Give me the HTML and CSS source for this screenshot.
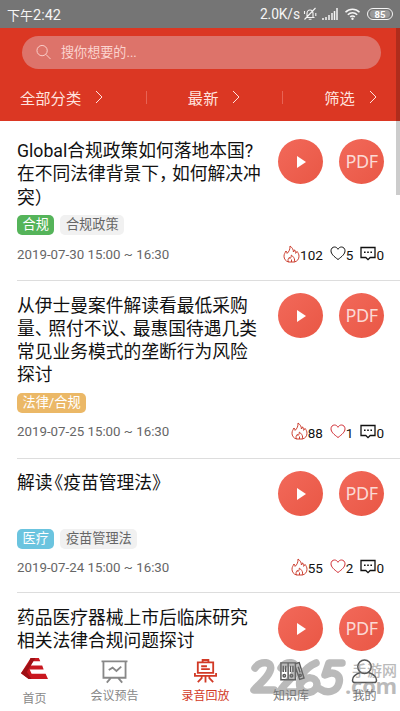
FILE: index.html
```html
<!DOCTYPE html>
<html lang="zh-CN">
<head>
<meta charset="utf-8">
<title>录音回放</title>
<link rel="stylesheet" href="styles.css">
</head>
<body>
<svg class="defs" aria-hidden="true">
  <symbol id="fire" viewBox="0 0 17 18"><path d="M5.500 17C2.500 16.200 1 13.800 1 11.200c0-2.200 1.200-3.400 1.900-5.200.8.600 1.200 1.400 1.200 2.400C6 6.700 7.300 4 7 1c2.300 1.600 3.500 3.700 3.400 6 .6-.5 1-1.200 1.100-2.200 1 1.200 1.200 2.300 1.100 3.500.7-.4 1.200-1 1.400-1.900 1.200 1.500 2 3 2 4.800 0 2.900-1.700 5-4.500 5.800zM5.500 17c-1-2-.3-3.500.9-4.700.3.400.5.800.5 1.300 1-.9 1.500-2 1.400-3.500 2 1.400 3.300 3.100 3.300 5 0 .8-.1 1.400-.4 1.900M8.500 17v-2.500"/></symbol>
  <symbol id="heart" viewBox="0 0 16 15"><path d="M8 13.500C4 10.500 1 8 1 4.800 1 2.600 2.600 1 4.500 1 6 1 7.300 1.900 8 3.300 8.700 1.900 10 1 11.500 1 13.400 1 15 2.600 15 4.800 15 8 12 10.500 8 13.500z"/></symbol>
  <symbol id="chat" viewBox="0 0 16 15"><path d="M1 1.500h14v10H10.200L8 13.700l-2.200-2.200H1z"/><path class="dots" d="M4 5.500h1.600v1.600H4zM7.200 5.500h1.600v1.600H7.200zM10.400 5.500H12v1.600h-1.600z"/></symbol>
  <symbol id="chev" viewBox="0 0 8 14"><path d="M1 1l6 6-6 6"/></symbol>
</svg>
<div class="screen">
  <div class="status">
    <span class="clock">下午<b>2:42</b></span>
    <span class="speed">2.0K/s</span>
    <svg class="bell" viewBox="0 0 14 14"><path d="M3 10.500h8.500M4 10V6.500c0-2 1.200-3.500 3-3.500s3 1.500 3 3.500V10M5.700 12.200h2.800M1.500 12.500L12.500 1M1.500 4v3M12.800 6v3"/></svg>
    <svg class="signal" viewBox="0 0 16 12"><path d="M1 12v-2M4 12V9M7 12V7M10 12V5M12.500 12V3M15 12V0"/></svg>
    <svg class="wifi" viewBox="0 0 16 12"><path d="M1 4.300c4-4 10-4 14 0M3.300 6.800c2.700-2.700 6.700-2.700 9.400 0M5.700 9c1.300-1.300 3.300-1.300 4.600 0"/><circle cx="8" cy="10.700" r="1.200"/></svg>
    <span class="battery"><b>85</b></span>
  </div>
  <header class="header">
    <div class="search">
      <svg viewBox="0 0 16 16"><circle cx="6.500" cy="6.500" r="5.500"/><path d="M10.500 10.500l5 5"/></svg>
      <span>搜你想要的...</span>
    </div>
    <nav class="filters">
      <div class="filter">全部分类<svg><use href="#chev"/></svg></div>
      <i></i>
      <div class="filter mid">最新<svg><use href="#chev"/></svg></div>
      <i></i>
      <div class="filter last">筛选<svg><use href="#chev"/></svg></div>
    </nav>
  </header>
  <main class="list">
    <article class="item first">
      <div class="top"><h2><span class="latin">Global</span>合规政策如何落地本国?<br>在不同法律背景下<span class="comma">，</span>如何解决冲<br>突）</h2><span class="btn play"></span><span class="btn">PDF</span></div>
      <div class="tags"><span class="tag green">合规</span><span class="tag">合规政策</span></div>
      <div class="meta"><time>2019-07-30 15:00 ~ 16:30</time><span class="stat hot"><svg><use href="#fire"/></svg>102</span><span class="stat like none"><svg><use href="#heart"/></svg>5</span><span class="stat chat"><svg><use href="#chat"/></svg>0</span></div>
    </article>
    <article class="item second">
      <div class="top"><h2>从伊士曼案件解读看最低采购<br>量<span class="pause">、</span>照付不议<span class="pause">、</span>最惠国待遇几类<br>常见业务模式的垄断行为风险<br>探讨</h2><span class="btn play"></span><span class="btn">PDF</span></div>
      <div class="tags"><span class="tag orange">法律/合规</span></div>
      <div class="meta"><time>2019-07-25 15:00 ~ 16:30</time><span class="stat hot"><svg><use href="#fire"/></svg>88</span><span class="stat like"><svg><use href="#heart"/></svg>1</span><span class="stat chat"><svg><use href="#chat"/></svg>0</span></div>
    </article>
    <article class="item third">
      <div class="top"><h2>解读<span class="open">《</span>疫苗管理法》</h2><span class="btn play"></span><span class="btn">PDF</span></div>
      <div class="tags"><span class="tag blue">医疗</span><span class="tag">疫苗管理法</span></div>
      <div class="meta"><time>2019-07-24 15:00 ~ 16:30</time><span class="stat hot"><svg><use href="#fire"/></svg>55</span><span class="stat like"><svg><use href="#heart"/></svg>2</span><span class="stat chat"><svg><use href="#chat"/></svg>0</span></div>
    </article>
    <article class="item fourth">
      <div class="top"><h2>药品医疗器械上市后临床研究<br>相关法律合规问题探讨</h2><span class="btn play"></span><span class="btn">PDF</span></div>
    </article>
  </main>
  <nav class="tabs">
    <div class="tab home"><svg viewBox="0 0 28 24"><path class="r1" d="M10 1h8.500l1.500 3.500h-7.500L10 9h12l1.500 4H9l2 4.500h14.500L28 23H8L0 17z"/><path class="r2" d="M0 17l8-11 2-5h5L6 15.500 11 23H8z"/></svg><span>首页</span></div>
    <div class="tab meet"><svg viewBox="0 0 28 26"><path d="M.5 2.500h27M2.500 2.500v17h23v-17M8 11.500l4-2.500 4 3.500L21 8M10 20l-4 4.500M18 20l4 4.500"/></svg><span>会议预告</span></div>
    <div class="tab active"><svg viewBox="0 0 28 26"><path d="M6 3.500h16v11H6zM11 3V1h6v2M9.500 7.500h6M9.500 10.500h9M3 14.500v3h22v-3M14 17.500v7M10 17.500v2.500l-4 4M18 17.500v2.500l4 4"/></svg><span>录音回放</span></div>
    <div class="tab lib"><svg viewBox="0 0 28 26"><path d="M3 4h7.500v17.500H3zM10.500 4H18v17.500h-7.500zM18 5l4-1.200 5 16-4.500 1.400L18 8M5.500 7v6.500M8 7v6.500M13 7v6.500M15.500 7v6.500M21 8l2 6"/><circle cx="6.500" cy="17.500" r="1.300"/><circle cx="14" cy="17.500" r="1.300"/><circle cx="23" cy="17" r="1.200"/></svg><span>知识库</span></div>
    <div class="tab me"><svg viewBox="0 0 28 26"><circle cx="14" cy="8" r="7"/><path d="M10 14c-5 1.500-8.500 4.500-8.500 8 0 1.500 1 2.500 2.500 2.500h20c1.500 0 2.500-1 2.500-2.500 0-3.500-3.500-6.500-8.500-8"/></svg><span>我的</span></div>
  </nav>
  <div class="watermark">
    <svg viewBox="0 0 100 40"><path d="M6 10C11 2 25 3 21 13 18 21 9 27 5 32h20M32 10C37 2 49 3 47 13 44 21 33 27 31 34h16M67 5C55 10 49 21 51 29 54 38 68 35 68 26 67 18 57 18 52 25M93 5H80L76 17C85 12 92 17 90 25 88 34 78 36 71 31"/></svg>
    <span>手游网</span><em>.com</em>
  </div>
  <div class="scroll"></div>
</div>
</body>
</html>
```
FILE: styles.css
```css
* { box-sizing: border-box; }
body { margin: 0; font-family: Roboto, "Noto Sans CJK SC", sans-serif; }
svg { fill: none; stroke: currentColor; flex: none; }
.defs { position: absolute; width: 0; height: 0; }
.screen { position: relative; width: 400px; height: 711px; overflow: hidden; background: #fff; display: flex; flex-direction: column; }
.status { height: 28px; flex: none; background: #757575; color: #f5f5f5; display: flex; align-items: center; padding: 0 7px; font-size: 14px; }
.clock { flex: 1; font-size: 13px; }
.clock b { font-weight: 400; font-size: 14.500px; }
.speed { font-size: 13.800px; letter-spacing: -.1px; }
.bell { width: 14px; height: 14px; margin-left: 3px; stroke-width: 1.100; }
.signal { width: 16px; height: 12px; margin-left: 5px; stroke-width: 1.500; }
.wifi { width: 17px; height: 12px; margin-left: 6px; stroke-width: 1.600; }
.wifi circle { fill: currentColor; stroke: none; }
.battery { width: 26px; height: 12px; margin-left: 6px; border: 1px solid #f5f5f5; border-radius: 6px; padding: 1px 2px; display: flex; }
.battery b { flex: 1; background: #999; border-radius: 4px; font-size: 9.500px; line-height: 9px; text-align: center; color: #fff; }
.header { height: 93px; flex: none; background: #db3723; padding: 7.500px 19px 0 22px; color: #ffe3df; }
.search { height: 33.500px; border-radius: 17px; background: #dd736a; display: flex; align-items: center; padding-left: 14px; font-size: 13.100px; color: #fbd3cf; }
.search svg { width: 15px; height: 16px; margin-right: 10px; }
.search span { position: relative; top: -1px; }
.filters { display: flex; align-items: center; height: 24px; margin: 16px 0 0 -2px; font-size: 15.300px; }
.filter { display: flex; align-items: center; width: 126.500px; }
.filter svg { width: 8px; height: 14px; margin-left: 14px; }
.filters i { width: 1px; height: 13px; background: #e86355; }
.mid { padding-left: 41px; width: 136px; }
.last { padding-left: 41px; width: 98px; white-space: nowrap; }
.list { flex: 1; overflow: hidden; min-height: 0; }
.item { margin-left: 17px; padding-right: 16px; border-bottom: 1px solid #ddd; }
.first { height: 160px; padding-top: 18px; }
.second { height: 178px; padding-top: 12px; }
.third { height: 134px; padding-top: 12px; }
.fourth { padding-top: 13px; border: 0; }
.top { display: flex; align-items: flex-start; }
h2 { flex: 1; margin: 0; padding-top: 1.500px; font-size: 17.750px; font-weight: 400; line-height: 23.300px; color: #111; white-space: nowrap; }
.first h2 { padding-top: .5px; line-height: 23.500px; }
.fourth h2 { padding-top: .5px; }
.latin { font-size: 17.700px; }
.third h2 { min-height: 56px; padding-top: .5px; }
.comma { display: inline-block; width: 13px; }
.pause { display: inline-block; width: 13.500px; }
.open { margin-left: -7px; }
.btn { width: 45px; height: 45px; border-radius: 50%; background: linear-gradient(135deg, #f2695a, #e95745); color: #fbd9d4; font: 18px/45px "Noto Sans", sans-serif; letter-spacing: -.4px; text-align: center; flex: none; }
.btn + .btn { margin-left: 16px; }
.btn.play { display: flex; align-items: center; padding-left: 19px; }
.play::before { content: ""; border-left: 9px solid #fff; border-top: 6px solid transparent; border-bottom: 6px solid transparent; }
.tags { display: flex; gap: 6px; margin-top: 5px; height: 20px; }
.third .tags { margin-top: 2px; }
.tag { height: 20px; border-radius: 5px; background: #f1f1f1; color: #666; font-size: 13.200px; line-height: 19px; padding: 0 5.500px; white-space: nowrap; }
.green { background: #55b45a; color: #fff; }
.orange { background: #ebb867; color: #fff; }
.blue { background: #6bc4df; color: #fff; }
.meta { display: flex; align-items: center; height: 20px; margin-top: 9px; color: #111; font-size: 13.500px; }
.third .meta { margin-top: 8px; }
time { flex: 1; color: #666; font-size: 13.300px; }
.stat { display: flex; align-items: center; height: 18px; margin-left: 7px; line-height: 22px; padding-top: 2px; }
.stat svg { width: 16px; height: 15px; margin: -3px 0 0; }
.stat.hot svg { width: 17px; height: 18px; color: #cc3f30; }
.like svg { color: #d22d35; }
.none svg { color: #111; }
.chat svg { stroke-width: 1.300; }
.dots { fill: currentColor; stroke: none; }
.tabs { height: 57px; flex: none; background: #fff; display: flex; color: #888; }
.tab { width: 91px; display: flex; flex-direction: column; align-items: center; font-size: 12px; line-height: 16px; padding-top: 5px; }
.tab svg { width: 27px; height: 25px; stroke-width: 1.900; margin-bottom: 4px; }
.home { width: 69px; padding-top: 2px; }
.tab.home svg { stroke: none; margin-bottom: 10px; }
.r1 { fill: #c91820; }
.r2 { fill: #9e1015; }
.active { color: #d23a26; }
.lib { width: 80px; }
.me { width: 69px; padding-right: 2px; }
.lib, .me { color: #777; }
.tab.lib svg, .tab.me svg { color: #555; stroke-width: 1.500; }
.watermark { position: absolute; left: 249px; top: 657px; width: 151px; height: 48px; color: #777; opacity: .5; display: flex; }
.watermark svg { width: 100px; height: 42px; stroke-width: 7.500; stroke-linecap: round; stroke-linejoin: round; }
.watermark span { position: absolute; left: 103px; top: 4px; font-size: 15px; line-height: 20px; font-weight: 500; white-space: nowrap; }
.watermark em { position: absolute; left: 96px; top: 15px; font: 700 22px/26px "Open Sans", sans-serif; letter-spacing: -.2px; }
.scroll { position: absolute; right: 0; top: 28px; width: 4.500px; height: 167px; background: rgba(0,0,0,.2); }
```
